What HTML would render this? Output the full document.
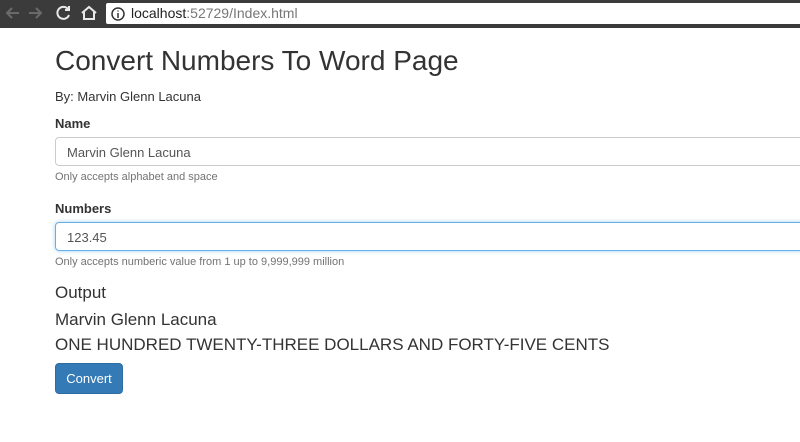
<!DOCTYPE html>
<html><head><style>
body{margin:0;width:800px;height:442px;overflow:hidden;background:#fff;font-family:"Liberation Sans",sans-serif;color:#333;position:relative}
.bar{position:absolute;left:0;top:0;width:800px;height:28px;background:#3b3b3b}
.url{position:absolute;left:106px;top:3px;width:700px;height:21px;background:#fff;border-radius:2px;font-size:14px;line-height:21px}
.t{position:absolute;left:55px;white-space:nowrap}
.inp{position:absolute;left:55px;width:760px;height:29px;border:1px solid #ccc;border-radius:4px;font-size:13px;line-height:29px;padding-left:11px;color:#555;box-sizing:border-box}
</style></head><body>
<div class="bar">
<svg width="100" height="28" style="position:absolute;left:0;top:0">
<g fill="none" stroke="#6a6a6a" stroke-width="2"><path d="M19 13H7M12 8l-5 5 5 5"/><path d="M29 13h12M36 8l5 5-5 5"/></g>
<g fill="none" stroke="#e8e8e8" stroke-width="2"><path d="M68 9a6 6 0 1 0 1 6"/><path d="M69 6v4h-4"/><path d="M82 13l7-6 7 6M84 12v7h10v-7"/></g>
</svg>
<div class="url"><svg width="14" height="14" style="position:absolute;left:5px;top:4px"><circle cx="7" cy="7" r="6" fill="none" stroke="#333" stroke-width="1.5"/><path d="M7 6v5M7 3.5v1" stroke="#333" stroke-width="1.5"/></svg><span style="position:absolute;left:25px;color:#222">localhost<span style="color:#777">:52729/Index.html</span></span></div>
</div>
<div class="t" style="top:45px;font-size:28px;color:#333">Convert Numbers To Word Page</div>
<div class="t" style="top:89px;font-size:13px">By: Marvin Glenn Lacuna</div>
<div class="t" style="top:116px;font-size:13px;font-weight:bold">Name</div>
<div class="inp" style="top:137px">Marvin Glenn Lacuna</div>
<div class="t" style="top:171px;font-size:11px;color:#737373">Only accepts alphabet and space</div>
<div class="t" style="top:201px;font-size:13px;font-weight:bold">Numbers</div>
<div class="inp" style="top:222px;border-color:#66afe9;box-shadow:0 0 4px rgba(102,175,233,.6)">123.45</div>
<div class="t" style="top:256px;font-size:11px;color:#737373">Only accepts numberic value from 1 up to 9,999,999 million</div>
<div class="t" style="top:283px;font-size:17px">Output</div>
<div class="t" style="top:310px;font-size:17px">Marvin Glenn Lacuna</div>
<div class="t" style="top:335px;font-size:17px">ONE HUNDRED TWENTY-THREE DOLLARS AND FORTY-FIVE CENTS</div>
<div style="position:absolute;left:55px;top:363px;width:68px;height:31px;background:#337ab7;border:1px solid #2e6da4;border-radius:4px;box-sizing:border-box;color:#fff;font-size:13px;line-height:29px;text-align:center">Convert</div>
</body></html>
